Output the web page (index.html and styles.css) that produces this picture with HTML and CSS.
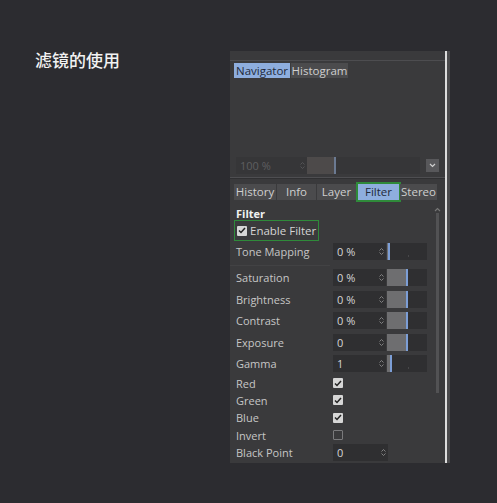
FILE: index.html
```html
<!DOCTYPE html>
<html>
<head>
<meta charset="utf-8">
<link rel="stylesheet" href="styles.css">
</head>
<body>
<div class="page">
  <div class="title">滤镜的使用</div>
  <div class="panel-wrap">
    <div class="panel">
      <div class="header"></div>
      <div class="tabs top-tabs">
        <div class="tab active nav">Navigator</div>
        <div class="tab hist">Histogram</div>
      </div>
      <div class="nav-area"></div>
      <div class="zoom-row">
        <div class="zoom-input"><span>100 %</span><span class="spin dim"><svg width="5" height="9" viewBox="0 0 5 9"><path d="M0.5 3.5 L2.5 1.5 L4.5 3.5 M0.5 5.5 L2.5 7.5 L4.5 5.5" fill="none" stroke="currentColor" stroke-width="0.9"/></svg></span></div>
        <div class="zoom-slider"><div class="zfill"></div><div class="zhandle"></div></div>
        <div class="dd"><svg width="7" height="5" viewBox="0 0 7 5"><path d="M1 1 L3.5 3.5 L6 1" fill="none" stroke="#d0d0d0" stroke-width="1.2"/></svg></div>
      </div>
      <div class="sep"></div>
      <div class="tabs bottom-tabs">
        <div class="tab t-history">History</div>
        <div class="tab t-info">Info</div>
        <div class="tab t-layer">Layer</div>
        <div class="tab active t-filter">Filter</div>
        <div class="tab t-stereo">Stereo</div>
      </div>
      <div class="content">
        <div class="props">
          <div class="section">Filter</div>
          <div class="enable">
            <span class="cb on"><svg width="8" height="7" viewBox="0 0 8 7"><path d="M1 3.5 L3 5.5 L7 1" fill="none" stroke="#222" stroke-width="1.5"/></svg></span>
            <span>Enable Filter</span>
          </div>
          <div class="row">
            <span class="label">Tone Mapping</span>
            <div class="input"><span>0 %</span><span class="spin"><svg width="5" height="9" viewBox="0 0 5 9"><path d="M0.5 3.5 L2.5 1.5 L4.5 3.5 M0.5 5.5 L2.5 7.5 L4.5 5.5" fill="none" stroke="currentColor" stroke-width="0.9"/></svg></span></div>
            <div class="slider"><div class="fill" style="width:1px"></div><div class="handle"></div><div class="tick"></div></div>
          </div>
          <div class="rowsep"></div>
          <div class="row">
            <span class="label">Saturation</span>
            <div class="input"><span>0 %</span><span class="spin"><svg width="5" height="9" viewBox="0 0 5 9"><path d="M0.5 3.5 L2.5 1.5 L4.5 3.5 M0.5 5.5 L2.5 7.5 L4.5 5.5" fill="none" stroke="currentColor" stroke-width="0.9"/></svg></span></div>
            <div class="slider"><div class="fill" style="width:19px"></div><div class="handle"></div></div>
          </div>
          <div class="row">
            <span class="label">Brightness</span>
            <div class="input"><span>0 %</span><span class="spin"><svg width="5" height="9" viewBox="0 0 5 9"><path d="M0.5 3.5 L2.5 1.5 L4.5 3.5 M0.5 5.5 L2.5 7.5 L4.5 5.5" fill="none" stroke="currentColor" stroke-width="0.9"/></svg></span></div>
            <div class="slider"><div class="fill" style="width:19px"></div><div class="handle"></div></div>
          </div>
          <div class="row">
            <span class="label">Contrast</span>
            <div class="input"><span>0 %</span><span class="spin"><svg width="5" height="9" viewBox="0 0 5 9"><path d="M0.5 3.5 L2.5 1.5 L4.5 3.5 M0.5 5.5 L2.5 7.5 L4.5 5.5" fill="none" stroke="currentColor" stroke-width="0.9"/></svg></span></div>
            <div class="slider"><div class="fill" style="width:19px"></div><div class="handle"></div></div>
          </div>
          <div class="row">
            <span class="label">Exposure</span>
            <div class="input"><span>0</span><span class="spin"><svg width="5" height="9" viewBox="0 0 5 9"><path d="M0.5 3.5 L2.5 1.5 L4.5 3.5 M0.5 5.5 L2.5 7.5 L4.5 5.5" fill="none" stroke="currentColor" stroke-width="0.9"/></svg></span></div>
            <div class="slider"><div class="fill" style="width:19px"></div><div class="handle"></div></div>
          </div>
          <div class="row">
            <span class="label">Gamma</span>
            <div class="input"><span>1</span><span class="spin"><svg width="5" height="9" viewBox="0 0 5 9"><path d="M0.5 3.5 L2.5 1.5 L4.5 3.5 M0.5 5.5 L2.5 7.5 L4.5 5.5" fill="none" stroke="currentColor" stroke-width="0.9"/></svg></span></div>
            <div class="slider"><div class="fill" style="width:3px"></div><div class="handle"></div><div class="tick"></div></div>
          </div>
          <div class="crow">
            <span class="label">Red</span>
            <span class="cb on"><svg width="8" height="7" viewBox="0 0 8 7"><path d="M1 3.5 L3 5.5 L7 1" fill="none" stroke="#222" stroke-width="1.5"/></svg></span>
          </div>
          <div class="crow">
            <span class="label">Green</span>
            <span class="cb on"><svg width="8" height="7" viewBox="0 0 8 7"><path d="M1 3.5 L3 5.5 L7 1" fill="none" stroke="#222" stroke-width="1.5"/></svg></span>
          </div>
          <div class="crow">
            <span class="label">Blue</span>
            <span class="cb on"><svg width="8" height="7" viewBox="0 0 8 7"><path d="M1 3.5 L3 5.5 L7 1" fill="none" stroke="#222" stroke-width="1.5"/></svg></span>
          </div>
          <div class="crow">
            <span class="label">Invert</span>
            <span class="cb off"></span>
          </div>
          <div class="row last">
            <span class="label">Black Point</span>
            <div class="input wide"><span>0</span><span class="spin"><svg width="5" height="9" viewBox="0 0 5 9"><path d="M0.5 3.5 L2.5 1.5 L4.5 3.5 M0.5 5.5 L2.5 7.5 L4.5 5.5" fill="none" stroke="currentColor" stroke-width="0.9"/></svg></span></div>
          </div>
        </div>
        <div class="scrollbar">
          <svg width="7" height="5" viewBox="0 0 7 5"><path d="M1 4 L3.5 1.5 L6 4" fill="none" stroke="#777" stroke-width="1.1"/></svg>
          <div class="track"></div>
        </div>
      </div>
    </div>
    <div class="edge"></div>
  </div>
</div>
</body>
</html>
```

FILE: styles.css
```css
html, body {
  margin: 0;
  padding: 0;
  background: #2c2c30;
}
body {
  width: 497px;
  height: 503px;
  overflow: hidden;
  font-family: "Open Sans", "Noto Sans", sans-serif;
}
.page {
  display: flex;
  padding-top: 51px;
}
.title {
  width: 230px;
  flex: none;
  padding-left: 35px;
  box-sizing: border-box;
  color: #f2f2f2;
  font-family: "Noto Sans CJK SC", sans-serif;
  font-size: 17px;
  font-weight: 500;
  line-height: 18px;
}
.panel-wrap {
  display: flex;
  height: 412px;
  flex: none;
}
.panel {
  width: 215px;
  background: #3a3a3c;
  display: flex;
  flex-direction: column;
  font-size: 11px;
  color: #c6c6c6;
  overflow: hidden;
}
.panel > *, .props > * { flex-shrink: 0; }
.edge {
  width: 2px;
  background: #dcdcdc;
  border-right: 3px solid #4a4a4c;
}
.header {
  height: 9px;
  border-bottom: 1px solid #4d4d50;
}
.tabs {
  display: flex;
  padding-left: 4px;
}
.top-tabs {
  margin-top: 2px;
  height: 15px;
}
.tab {
  background: #4b4b4d;
  color: #cfcfcf;
  line-height: 15px;
  text-align: center;
  margin-right: 1px;
}
.top-tabs .tab {
  font-size: 11.5px;
}
.tab.active {
  background: #8eaede;
  color: #1f2a3a;
}
.nav { width: 56px; }
.hist { width: 57px; }
.nav-area {
  height: 79px;
}
.zoom-row {
  display: flex;
  align-items: center;
  height: 17px;
  padding-left: 6px;
}
.zoom-input {
  width: 71px;
  height: 17px;
  box-sizing: border-box;
  padding-left: 4px;
  padding-right: 2px;
  background: #363638;
  color: #5e5e60;
  display: flex;
  align-items: center;
  justify-content: space-between;
}
.spin {
  display: flex;
  color: #8a8a8a;
}
.spin.dim { color: #575759; }
.zoom-slider {
  width: 113px;
  height: 17px;
  background: #363638;
  display: flex;
}
.zfill {
  width: 27px;
  background: #4d4a4a;
}
.zhandle {
  width: 2px;
  background: #6b7a92;
}
.dd {
  width: 13px;
  height: 13px;
  margin-left: 6px;
  background: #58585b;
  display: flex;
  align-items: center;
  justify-content: center;
}
.sep {
  margin-top: 3px;
  height: 1px;
  background: #4e4e51;
  border-bottom: 1px solid #303032;
}
.bottom-tabs {
  margin-top: 4px;
  height: 17px;
  align-items: center;
}
.bottom-tabs .tab {
  height: 16px;
  line-height: 16px;
  font-size: 11.5px;
}
.t-history { width: 42px; }
.t-info { width: 39px; }
.t-layer { width: 39px; margin-right: 2px; }
.t-filter {
  width: 41px;
  box-sizing: border-box;
  outline: 2px solid #2f8a3a;
}
.t-stereo { width: 37px; margin-right: 0; }
.content {
  display: flex;
  flex: 1;
}
.props {
  width: 196px;
  padding-left: 6px;
  display: flex;
  flex-direction: column;
}
.section {
  margin-top: 7px;
  height: 13px;
  line-height: 13px;
  font-weight: 700;
  color: #f0f0f0;
}
.enable {
  margin-left: -2px;
  width: 85px;
  height: 21px;
  box-sizing: border-box;
  border: 1.5px solid #2f8a3a;
  display: flex;
  align-items: center;
  padding-left: 2px;
  gap: 3px;
  color: #d4d4d4;
  font-size: 11.5px;
}
.cb {
  width: 10px;
  height: 10px;
  box-sizing: border-box;
  border-radius: 1px;
  display: flex;
  align-items: center;
  justify-content: center;
}
.cb.on { background: #d6d6d6; }
.cb.off { border: 1px solid #7a7a7c; }
.row {
  display: flex;
  align-items: center;
  height: 21.5px;
}
.row.last { height: 18px; }
.rowsep {
  height: 1px;
  margin: 2px 0 1.5px -6px;
  width: 100px;
  background: #424244;
}
.label {
  width: 97px;
  flex: none;
}
.input {
  width: 53px;
  height: 17px;
  box-sizing: border-box;
  background: #2f2f31;
  color: #d6d6d6;
  display: flex;
  align-items: center;
  justify-content: space-between;
  padding-left: 4px;
  padding-right: 2px;
}
.input.wide { width: 55px; }
.slider {
  position: relative;
  width: 40px;
  height: 17px;
  margin-left: 1px;
  background: #2f2f31;
  display: flex;
}
.fill { background: #6e6e70; }
.handle {
  width: 2px;
  background: #7c9ed6;
}
.tick {
  position: absolute;
  left: 21px;
  bottom: 3px;
  width: 1px;
  height: 2px;
  background: #474749;
}
.crow {
  display: flex;
  align-items: center;
  height: 17.3px;
}
.scrollbar {
  width: 8px;
  margin-left: 1px;
  display: flex;
  flex-direction: column;
  align-items: center;
  padding-top: 7px;
}
.track {
  margin-top: 1px;
  width: 3px;
  height: 180px;
  background: #525254;
}
```
